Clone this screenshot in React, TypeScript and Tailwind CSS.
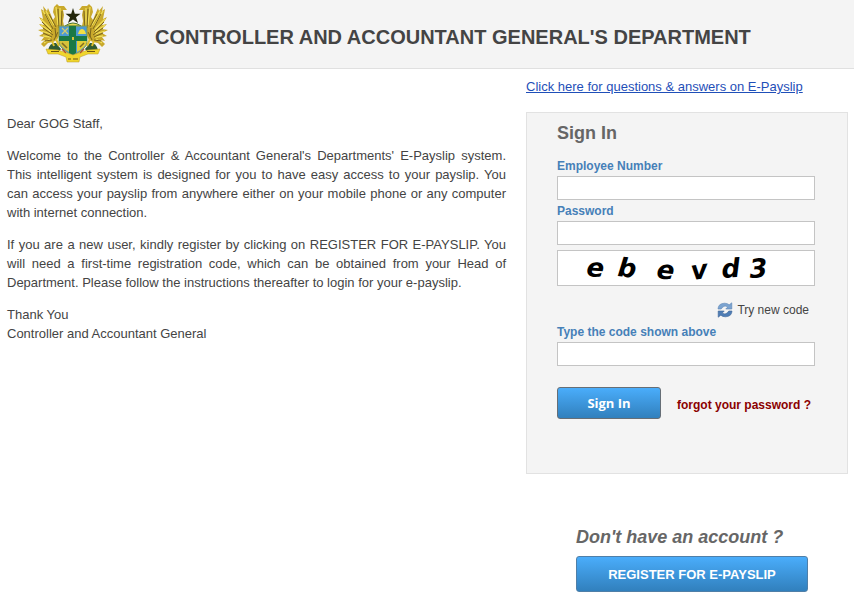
import { FormEvent, useState } from 'react';

interface FieldProps {
    id: string;
    label: string;
    type?: string;
}

function Field({ id, label, type = 'text' }: FieldProps) {
    return (
        <div>
            <label htmlFor={id} className="block text-xs leading-5 font-bold text-[#4680b8]">
                {label}
            </label>
            <input
                id={id}
                name={id}
                type={type}
                className="block h-6 w-full border border-[#c4c4c4] bg-white px-1 text-[13px]"
            />
        </div>
    );
}

// One supporter of the coat of arms, facing the shield from the left
function Eagle() {
    return (
        <g>
            <path
                d="M3 6 L6 8 L5 3 L9 8 L10 5 L13 12 L15 17 L17 14 L15 9 L16 4 L19 1 L21 3 L26 3 L29 7 L25 7 L26 12 L25 18 L26 23 L24 29 L21 33 L19 37 L15 39 L10 40 L6 44 L3 41 L7 37 L3 38 L6 34 L1 33 L6 30 L0 27 L6 26 L1 21 L6 22 L1 14 L5 16 Z"
                fill="#c9a92c"
            />
            <path
                d="M5 8 L14 23 M8 8 L16 22 M3 16 L13 26 M3 22 L13 29 M3 28 L13 31 M5 33 L13 34 M18 4 L20 22 M22 5 L22 24 M6 40 L12 36"
                stroke="#f0df58"
                strokeWidth="1.3"
                fill="none"
            />
            <path
                d="M7 11 L15 26 M11 11 L18 24 M4 19 L14 29 M5 25 L15 32 M5 30 L14 34 M20 6 L21 25 M24 8 L23 27 M17 25 L18 34 M20 29 L16 37 M7 38 L14 37"
                stroke="#7a641c"
                strokeWidth="1"
                fill="none"
            />
            <path d="M10 47 Q12 39 18 40 L23 46 L20 50 Z" fill="#315b33" />
            <path d="M18 36 L21 43 M14 38 L16 43" stroke="#e0c02d" strokeWidth="2" />
        </g>
    );
}

function CoatOfArms() {
    return (
        <svg viewBox="0 0 70 60" className="block h-[60px] w-[70px]" role="img" aria-label="Coat of arms of Ghana">
            <Eagle />
            <g transform="translate(70 0) scale(-1 1)">
                <Eagle />
            </g>
            <path
                d="M35 5 L36.8 10.8 L42.5 10.8 L38 14.2 L40 20 L35 16.5 L30 20 L32 14.2 L27.5 10.8 L33.2 10.8 Z"
                fill="#24270d"
            />
            <path d="M27 23 Q35 17 43 23 Z" fill="#e8da55" stroke="#49732f" strokeWidth="1" />
            <path d="M21 23 H49 V39 Q48 47 35 52 Q22 47 21 39 Z" fill="#4d9ad2" stroke="#8b9b45" strokeWidth="1" />
            <path d="M39 36 H48.5 V39 Q48 44 39 49 Z" fill="#e3cf38" />
            <path d="M31 36 H21.5 V39 Q22 44 31 49 Z" fill="#d6c23a" />
            <path d="M31 23 H38 V50 L35 52 L31 50 Z M21 33 H49 V38 H21 Z" fill="#1b7945" />
            <path d="M24 31 L30 25 M24 25 L30 31" stroke="#d7cc6a" strokeWidth="1.2" />
            <path d="M40 31 L41 28 Q44 24 47 28 L48 31 Z" fill="#f2df45" />
            <path d="M34 34 H36 V37 H34 Z" fill="#d9c33a" />
            <path d="M24 40 L29 45 M42 44 L46 40" stroke="#816b22" strokeWidth="1.5" />
            <path
                d="M8 46 L20 47 L29 50 L35 52 L41 50 L50 47 L62 46 L60 51 L50 51 L42 54 L41 59 H29 L28 54 L20 51 L10 51 Z"
                fill="#f0d52c"
                stroke="#b7992a"
                strokeWidth="0.5"
            />
            <path d="M24 46 L28 50 M46 46 L42 50" stroke="#b5542b" strokeWidth="1.5" />
            <path d="M13 48.5 H21 M30 56 H33 M35 56 H40 M49 48.5 H57" stroke="#6b5314" strokeWidth="1.2" />
        </svg>
    );
}

function RefreshIcon() {
    return (
        <svg viewBox="0 0 16 16" className="size-4" aria-hidden="true">
            <path
                d="M1 7 Q1.2 1.5 7.5 1.2 Q10.5 1.2 12.2 2.8 L14.8 0.8 V7 H8.8 L10.7 5 Q7 2.5 4.2 7 Z"
                fill="#7ba3d0"
                stroke="#5b84b5"
                strokeWidth="0.6"
            />
            <path
                d="M15 9 Q14.8 14.5 8.5 14.8 Q5.5 14.8 3.8 13.2 L1.2 15.2 V9 H7.2 L5.3 11 Q9 13.5 11.8 9 Z"
                fill="#4f7db5"
                stroke="#3c6497"
                strokeWidth="0.6"
            />
        </svg>
    );
}

function Captcha() {
    return (
        <svg
            viewBox="0 0 256 34"
            className="block h-9 w-full border border-[#c4c4c4] bg-white"
            role="img"
            aria-label="Verification code"
        >
            <text
                x="28 59 98 134 164 192"
                y="25 25 27 29 27 27"
                rotate="4 6 6 -8 -4 -4"
                className="font-['DejaVu_Sans',sans-serif] text-[26px] font-bold italic"
                fill="#000"
            >
                ebevd3
            </text>
        </svg>
    );
}

export default function App() {
    const [, setAttempt] = useState(0);

    const handleSubmit = (event: FormEvent) => {
        event.preventDefault();
        setAttempt((n) => n + 1);
    };

    return (
        <div className="min-h-screen bg-white font-['Liberation_Sans',Arial,sans-serif] text-[13px] leading-[19px] text-[#444]">
            <header className="flex items-start border-b border-[#e0e0e0] bg-[#f4f4f4] pt-[3px] pb-[5px] pl-[38px]">
                <CoatOfArms />
                <h1 className="ml-[47px] pt-5 text-xl leading-7 font-bold text-[#444]">
                    CONTROLLER AND ACCOUNTANT GENERAL'S DEPARTMENT
                </h1>
            </header>

            <main className="flex items-start gap-5 pr-1.5 pl-[7px]">
                <section className="flex-1 space-y-[13px] pt-[45px] text-justify">
                    <p>Dear GOG Staff,</p>
                    <p>
                        Welcome to the Controller &amp; Accountant General's Departments' E-Payslip system. This
                        intelligent system is designed for you to have easy access to your payslip. You can access
                        your payslip from anywhere either on your mobile phone or any computer with internet
                        connection.
                    </p>
                    <p>
                        If you are a new user, kindly register by clicking on REGISTER FOR E-PAYSLIP. You will need a
                        first-time registration code, which can be obtained from your Head of Department. Please
                        follow the instructions thereafter to login for your e-payslip.
                    </p>
                    <p>
                        Thank You
                        <br />
                        Controller and Accountant General
                    </p>
                </section>

                <aside className="w-[322px] shrink-0 pt-2">
                    <a href="#faq" className="text-[#1f4fb8] underline">
                        Click here for questions &amp; answers on E-Payslip
                    </a>

                    <form
                        onSubmit={handleSubmit}
                        className="mt-4 border border-[#e2e2e2] bg-[#f4f4f4] pt-2 pr-8 pb-[54px] pl-[30px]"
                    >
                        <h2 className="mb-[11px] text-lg leading-6 font-bold text-[#666]">Sign In</h2>
                        <div className="space-y-px">
                            <Field id="employee-number" label="Employee Number" />
                            <Field id="password" label="Password" type="password" />
                        </div>
                        <div className="mt-[5px]">
                            <Captcha />
                        </div>
                        <div className="mt-4 mb-1 flex justify-end pr-1.5">
                            <button type="button" className="flex items-center gap-1 text-xs leading-4">
                                <RefreshIcon />
                                Try new code
                            </button>
                        </div>
                        <Field id="code" label="Type the code shown above" />
                        <div className="mt-[21px] flex items-center gap-4">
                            <button
                                type="submit"
                                className="h-8 w-[104px] rounded-[3px] border border-[#666e76] bg-linear-to-b from-[#4aadfb] to-[#3180bd] font-['Open_Sans',sans-serif] text-[13px] font-bold text-white"
                            >
                                Sign In
                            </button>
                            <a href="#forgot" className="pt-1 text-xs font-bold text-[#8b0000]">
                                forgot your password ?
                            </a>
                        </div>
                    </form>

                    <div className="mt-[51px] pr-10 pl-[50px]">
                        <h2 className="text-lg leading-6 font-bold text-[#666] italic">Don't have an account ?</h2>
                        <button
                            type="button"
                            className="mt-[7px] h-9 w-full rounded-[3px] border border-[#4f7fa8] bg-linear-to-b from-[#4aadfb] to-[#3180bd] text-[13px] font-bold text-white"
                        >
                            REGISTER FOR E-PAYSLIP
                        </button>
                    </div>
                </aside>
            </main>
        </div>
    );
}
